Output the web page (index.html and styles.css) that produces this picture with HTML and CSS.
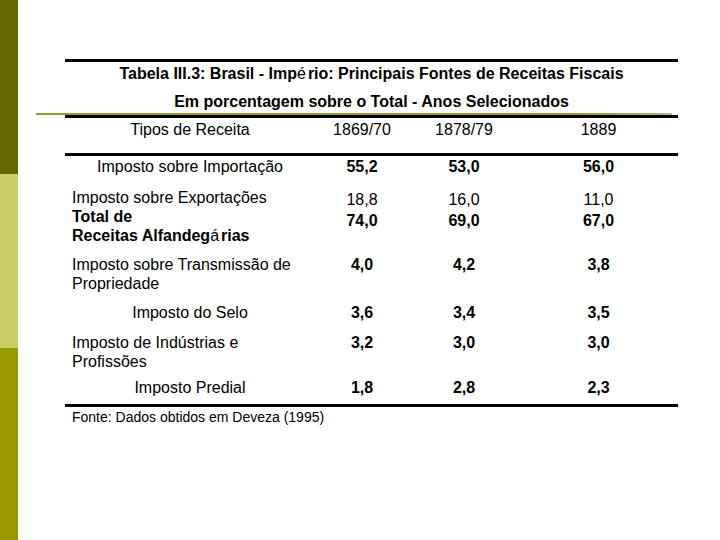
FILE: index.html
```html
<!DOCTYPE html>
<html lang="pt">
<head>
<meta charset="utf-8">
<title>Tabela III.3</title>
<link rel="stylesheet" href="styles.css">
</head>
<body>
<div class="page">
  <div class="sidebar">
    <div class="band band-dark"></div>
    <div class="band band-light"></div>
    <div class="band band-olive"></div>
  </div>
  <div class="main">
    <div class="rule rule-top"></div>
    <div class="title">Tabela III.3: Brasil - Imp<span class="acc">é</span>rio: Principais Fontes de Receitas Fiscais</div>
    <div class="subtitle">Em porcentagem sobre o Total - Anos Selecionados</div>
    <div class="olive-line"></div>
    <div class="rule"></div>

    <div class="row row-head">
      <div class="cell center">Tipos de Receita</div>
      <div class="cell num">1869/70</div>
      <div class="cell num">1878/79</div>
      <div class="cell num">1889</div>
    </div>
    <div class="rule rule-mid"></div>

    <div class="row r1">
      <div class="cell center">Imposto sobre Importação</div>
      <div class="cell num bold">55,2</div>
      <div class="cell num bold">53,0</div>
      <div class="cell num bold">56,0</div>
    </div>
    <div class="row r2">
      <div class="cell left">Imposto sobre Exportações<br><span class="bold">Total de<br>Receitas Alfandeg<span class="acc">á</span>rias</span></div>
      <div class="cell num pair">18,8<br><span class="bold">74,0</span></div>
      <div class="cell num pair">16,0<br><span class="bold">69,0</span></div>
      <div class="cell num pair">11,0<br><span class="bold">67,0</span></div>
    </div>
    <div class="row r3">
      <div class="cell left">Imposto sobre Transmissão de<br>Propriedade</div>
      <div class="cell num bold">4,0</div>
      <div class="cell num bold">4,2</div>
      <div class="cell num bold">3,8</div>
    </div>
    <div class="row r4">
      <div class="cell center">Imposto do Selo</div>
      <div class="cell num bold">3,6</div>
      <div class="cell num bold">3,4</div>
      <div class="cell num bold">3,5</div>
    </div>
    <div class="row r5">
      <div class="cell left">Imposto de Indústrias e<br>Profissões</div>
      <div class="cell num bold">3,2</div>
      <div class="cell num bold">3,0</div>
      <div class="cell num bold">3,0</div>
    </div>
    <div class="row r6">
      <div class="cell center">Imposto Predial</div>
      <div class="cell num bold">1,8</div>
      <div class="cell num bold">2,8</div>
      <div class="cell num bold">2,3</div>
    </div>
    <div class="rule rule-bottom"></div>
    <div class="source">Fonte: Dados obtidos em Deveza (1995)</div>
  </div>
</div>
</body>
</html>
```

FILE: styles.css
```css
html, body {
  margin: 0;
  padding: 0;
  background: #ffffff;
}

body {
  font-family: "Liberation Sans", Arial, sans-serif;
  color: #000000;
  font-size: 16px;
  line-height: 19px;
}

.page {
  display: flex;
  width: 720px;
  height: 540px;
}

.sidebar {
  width: 18px;
  display: flex;
  flex-direction: column;
  flex: none;
}

.band-dark {
  height: 174px;
  background: #666600;
}

.band-light {
  height: 174px;
  background: #cccc66;
}

.band-olive {
  flex: 1;
  background: #999900;
}

.main {
  flex: 1;
  padding-top: 59px;
}

.rule {
  margin-left: 47px;
  width: 613px;
  height: 3px;
  background: #000000;
}

.title {
  margin-left: 47px;
  width: 613px;
  margin-top: 2px;
  text-align: center;
  font-weight: bold;
}

.subtitle {
  margin-left: 47px;
  width: 613px;
  margin-top: 9px;
  text-align: center;
  font-weight: bold;
}

.acc {
  font-weight: normal;
  margin-right: 2px;
}

.olive-line {
  margin-left: 18px;
  margin-top: 2px;
  width: 636px;
  height: 2px;
  background: linear-gradient(to right, #999933 0%, #999933 85%, #b4b488 100%);
}

.row {
  margin-left: 47px;
  width: 613px;
  display: grid;
  grid-template-columns: 250px 94px 110px 159px;
}

.cell.center {
  text-align: center;
}

.cell.left {
  padding-left: 7px;
}

.cell.num {
  text-align: center;
}

.cell.pair {
  padding-top: 1px;
  line-height: 21px;
}

.bold {
  font-weight: bold;
}

.row-head {
  margin-top: 2px;
  margin-bottom: 14px;
}

.r1 { margin-top: 1px; }
.r2 { margin-top: 12px; }
.r3 { margin-top: 10px; }
.r4 { margin-top: 10px; }
.r5 { margin-top: 11px; }
.r6 { margin-top: 7px; }

.rule-bottom {
  margin-top: 7px;
}

.source {
  margin-left: 54px;
  margin-top: 2px;
  font-size: 14px;
  line-height: 16px;
}
```
